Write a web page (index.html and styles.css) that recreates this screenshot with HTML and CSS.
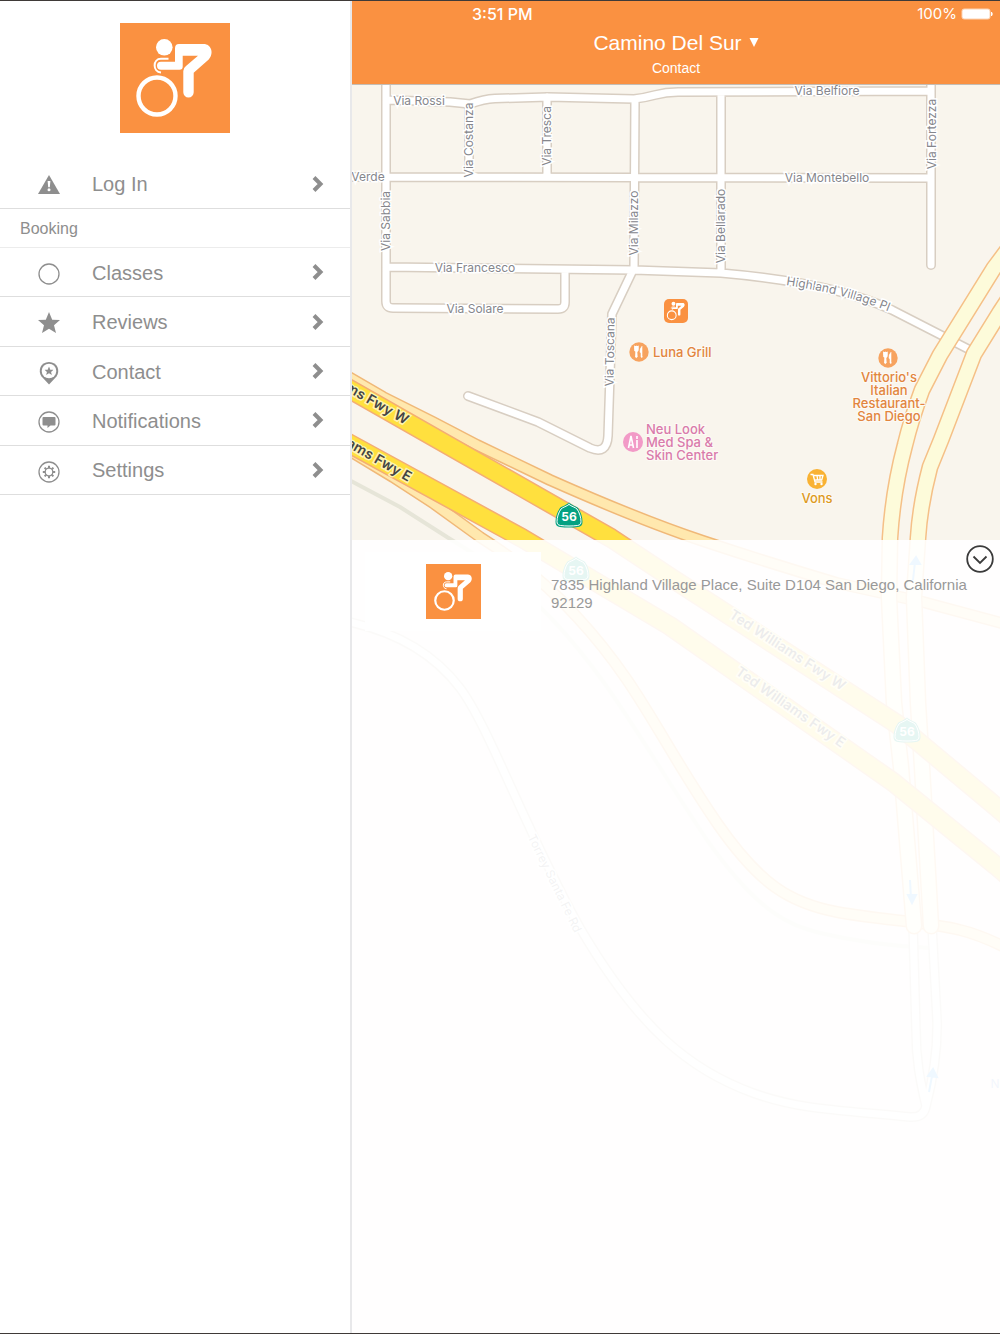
FILE: index.html
```html
<!DOCTYPE html>
<html lang="en">
<head>
  <meta charset="UTF-8">
  <meta name="viewport" content="width=device-width, initial-scale=1.0">
  <title>Camino Del Sur - Contact</title>
  <link rel="stylesheet" href="styles.css">
</head>
<body>
  <!-- shared shapes -->
  <svg class="defs" aria-hidden="true">
    <symbol id="rider" viewBox="0 0 110 110">
      <circle cx="44.3" cy="24.3" r="8.3" fill="#fff"/>
      <circle cx="37" cy="73" r="18.5" fill="none" stroke="#fff" stroke-width="4.4"/>
      <path d="M48.5 35.8H41c-8.500 0-8.500 13 0 13.700" fill="none" stroke="#fff" stroke-width="2"/>
      <path d="M55 25.300Q55 21 59 21H83.700C91 21 94.500 30 88.700 36.500L73.700 49.700V69.300a5.200 5.200 0 0 1-10.400 0V48Q63.300 45 66 43L78 32.700H62.700V43.500Q62.700 46.700 59.500 46.700H41a4 4 0 0 1 0-8H55Z" fill="#fff"/>
    </symbol>
    <symbol id="chevron" viewBox="0 0 12 18">
      <path d="M2 2.500 8.500 9 2 15.500" fill="none" stroke="currentColor" stroke-width="4"/>
    </symbol>
    <symbol id="shield" viewBox="0 0 28 26">
      <path d="M14 .5C17 3.500 21 4 23 6c3 4 4.500 9 4.500 14 0 3-1.500 4.500-4.500 5-6 .7-12 .7-18 0-3-.5-4.500-2-4.500-5C.5 15 2 10 5 6c2-2 6-2.500 9-5.500Z" fill="#04a182"/>
      <path d="M14 2.500c2.500 2 6 2.600 8 4.500 2.500 3.500 4 8.500 4 12.500 0 2.500-1 3.500-3.500 4-5.500.7-11.500.7-17 0-2.500-.5-3.500-1.500-3.500-4C2 15.500 3.500 10.500 6 7c2-1.900 5.500-2.500 8-4.500Z" fill="none" stroke="#fff"/>
    </symbol>
    <symbol id="food" viewBox="0 0 20 20">
      <circle cx="10" cy="10" r="9.700" fill="#f7a35f"/>
      <path d="M5.500 4v3.500q0 2 1.300 2.300L6.500 15q.8 1.200 1.700 0L7.900 9.800q1.400-.3 1.400-2.300V4M7.400 4v4" fill="#fff" stroke="#fff" stroke-width=".8"/>
      <path d="M13 15V4.300q-2.200 1.800-2 6l1 .5V15q.6.900 1 0Z" fill="#fff" stroke="#fff" stroke-width=".6"/>
    </symbol>
    <symbol id="star" viewBox="0 0 22 22">
      <path d="M11 0l3.200 7.700 7.800.4-6 5.200 2 7.700-7-4.300L4 21l2-7.700L0 8.100l7.800-.4Z" fill="currentColor"/>
    </symbol>
  </svg>

  <div class="app">
    <aside class="sidebar">
      <svg class="logo" viewBox="0 0 110 110" role="img" aria-label="Logo"><use href="#rider"/></svg>

      <nav>
        <a class="item login" href="#login">
          <svg class="icon" viewBox="0 0 22 22"><path d="M11 1 22 20H0Z" fill="currentColor"/><path d="M9.600 7h2.800l-.6 6.300h-1.600Z" fill="#fff"/><circle cx="11" cy="15.700" r="1.500" fill="#fff"/></svg>
          <span>Log In</span>
          <svg class="chevron"><use href="#chevron"/></svg>
        </a>

        <h2>Booking</h2>

        <ul class="menu">
          <li><a class="item" href="#classes">
            <svg class="icon" viewBox="0 0 22 22"><circle cx="11" cy="12" r="10" fill="none" stroke="currentColor" stroke-width="1.300"/></svg>
            <span>Classes</span>
            <svg class="chevron"><use href="#chevron"/></svg>
          </a></li>
          <li><a class="item" href="#reviews">
            <svg class="icon"><use href="#star"/></svg>
            <span>Reviews</span>
            <svg class="chevron"><use href="#chevron"/></svg>
          </a></li>
          <li><a class="item" href="#contact">
            <svg class="icon" viewBox="0 0 22 22">
              <path d="M3.500 15.500C-.5 9.500 2.500 1 11 1s11.500 8.500 7.500 14.500L11 23.500Z" fill="currentColor"/>
              <circle cx="11" cy="10" r="7.300" fill="#fff"/>
              <use href="#star" x="6.500" y="5.500" width="9" height="9"/>
            </svg>
            <span>Contact</span>
            <svg class="chevron"><use href="#chevron"/></svg>
          </a></li>
          <li><a class="item" href="#notifications">
            <svg class="icon" viewBox="0 0 22 22"><circle cx="11" cy="12" r="10" fill="none" stroke="currentColor" stroke-width="1.300"/><path d="M5.500 7h11q1 0 1 1v6.500q0 1-1 1h-4L9.500 18v-2.500h-4q-1 0-1-1V8q0-1 1-1Z" fill="currentColor"/></svg>
            <span>Notifications</span>
            <svg class="chevron"><use href="#chevron"/></svg>
          </a></li>
          <li><a class="item" href="#settings">
            <svg class="icon" viewBox="0 0 22 22">
              <circle cx="11" cy="12" r="10" fill="none" stroke="currentColor" stroke-width="1.300"/>
              <circle cx="11" cy="12" r="3.800" fill="none" stroke="currentColor" stroke-width="1.300"/>
              <path d="M11 5.800V8M11 16v2.200M4.800 12H7M15 12h2.200M6.600 7.600l1.600 1.600M13.800 14.800l1.600 1.600M6.600 16.400l1.600-1.600M13.800 9.200l1.600-1.600" stroke="currentColor" stroke-width="2"/>
            </svg>
            <span>Settings</span>
            <svg class="chevron"><use href="#chevron"/></svg>
          </a></li>
        </ul>
      </nav>
    </aside>

    <main>
      <header>
        <div class="status">
          <span class="time">3:51 PM</span>
          <span class="battery">100%
            <svg width="32" height="12" viewBox="0 0 32 12"><rect x=".5" y=".5" width="29" height="11" rx="3" fill="#fff" fill-opacity=".6"/><rect x="1.500" y="1.500" width="27" height="9" rx="2" fill="#fff"/><path d="M30.500 4q1.500 2 0 4Z" fill="#fff" stroke="#fff"/></svg>
          </span>
        </div>
        <button class="location" type="button">Camino Del Sur
          <svg width="10" height="10" viewBox="0 0 10 10"><path d="M.5 0H9.500L5 9Z" fill="#fff"/></svg>
        </button>
        <p class="page-name">Contact</p>
      </header>

      <section class="contact">
        <svg class="map" viewBox="352 85 648 1248" preserveAspectRatio="xMidYMin slice" role="img" aria-label="Map">
          <defs>
            <path id="streets" d="M386 70V301Q386 308 393 308L558 309Q565 309 565 302V270M386 267 634 270 721 273C790 279 850 290 892 310L972 351M340 177H386L931 178M386 100 450 102 470 104Q484 99 495 98.500L548 97 634 99Q644 98 655 95T678 92L931 91M469 104V177M547 97V177M635 99 634 270M721 92V272M931 70V265M633 270 612 314 608 436Q607 455 590 448L538 422 468 396"/>
            <path id="lower-streets" d="M340 620Q420 635 460 688C490 728 525 830 580 928C640 1030 690 1070 753 1093C800 1110 840 1110 910 1117Q924 1118 926 1106C920 1080 916 1060 916 1030L913 925M926 1106Q938 1060 937 1020L932 925"/>
            <path id="ramps" d="M345 375 383 397 433 422 477 445 550 480Q640 520 703 541T837 583L923 602 1020 628M345 448 393 477 433 503 480 537Q540 575 577 617C640 685 660 740 717 823C760 885 790 903 837 912C880 920 930 922 960 930Q985 936 1020 955"/>
            <path id="avenue" d="M1015 240 994 268 940 355 922 390Q911 420 905 445 893 490 890 538L889 597 894 703 901 767 914 926M1015 289 1000 312 974 354 941 440 930 467Q920 505 918 538L914 597 918 703 922 767 931 926"/>
            <path id="freeway" d="M330 378 611 538 670 577 897 724 1000 810 1030 836M330 433 522 538 670 626 893 782 1000 869 1030 895"/>
            <path id="highland" d="M786 285C825 291 860 299 900 316"/>
          </defs>

          <path class="rail" d="M340 475 400 507 447 537Q510 575 550 617C610 680 640 740 707 840C760 915 790 925 820 933Q870 945 930 948"/>
          <use class="casing" href="#lower-streets"/>
          <use class="road" href="#lower-streets"/>
          <use class="casing" href="#streets"/>
          <use class="road" href="#streets"/>
          <use class="ramp-casing" href="#ramps"/>
          <use class="ramp" href="#ramps"/>
          <use class="avenue-casing" href="#avenue"/>
          <use class="avenue" href="#avenue"/>
          <use class="freeway-casing" href="#freeway"/>
          <use class="freeway" href="#freeway"/>

          <g class="arrows">
            <path d="M913 580 915 562M911 564h9l-4-7ZM910 880 911 898M908 895h8l-4 8ZM929 1092 932 1076M928 1076l9 1-4-8Z"/>
          </g>

          <g class="street-names">
            <text x="419" y="105">Via Rossi</text>
            <text x="827" y="95">Via Belfiore</text>
            <text x="827" y="182">Via Montebello</text>
            <text x="368" y="181">Verde</text>
            <text x="475" y="272">Via Francesco</text>
            <text x="475" y="313">Via Solare</text>
            <text transform="translate(473 140) rotate(-90)">Via Costanza</text>
            <text transform="translate(551 136) rotate(-90)">Via Tresca</text>
            <text transform="translate(390 221) rotate(-90)">Via Sabbia</text>
            <text transform="translate(638 223) rotate(-90)">Via Milazzo</text>
            <text transform="translate(725 226) rotate(-90)">Via Bellarado</text>
            <text transform="translate(936 134) rotate(-90)">Via Fortezza</text>
            <text transform="translate(614 352) rotate(-89)">Via Toscana</text>
            <text transform="translate(551 885) rotate(64)">Torrey Santa Fe Rd</text>
            <text class="along"><textPath href="#highland">Highland Village Pl</textPath></text>
          </g>

          <g class="freeway-names">
            <text class="end" transform="translate(405 425) rotate(30)">Ted Williams Fwy W</text>
            <text class="end" transform="translate(408 482) rotate(30)">Ted Williams Fwy E</text>
            <text transform="translate(785 654) rotate(33)">Ted Williams Fwy W</text>
            <text transform="translate(788 711) rotate(35)">Ted Williams Fwy E</text>
          </g>

          <g class="shields">
            <use href="#shield" x="555" y="502" width="28" height="26"/>
            <text x="569" y="521">56</text>
            <use href="#shield" x="562" y="556" width="28" height="26"/>
            <text x="576" y="575">56</text>
            <use href="#shield" x="893" y="717" width="28" height="26"/>
            <text x="907" y="736">56</text>
          </g>

          <rect x="664" y="299" width="24" height="24" rx="5" fill="#fa9141"/>
          <use href="#rider" x="663" y="298" width="26" height="26"/>

          <g class="poi orange">
            <use href="#food" x="629" y="342" width="20" height="20"/>
            <text class="start" x="653" y="357">Luna Grill</text>
            <use href="#food" x="878" y="348" width="20" height="20"/>
            <text x="889" y="382">Vittorio's</text>
            <text x="889" y="395">Italian</text>
            <text x="889" y="408">Restaurant-</text>
            <text x="889" y="421">San Diego</text>
          </g>
          <g class="poi pink">
            <circle cx="633" cy="442" r="10" fill="#f29ac7"/>
            <path d="M628.500 448 631 436 633.500 448M629.500 445h3.500M637 448v-8M637 439v-3" fill="none" stroke="#fff" stroke-width="1.600"/>
            <text class="start" x="646" y="434">Neu Look</text>
            <text class="start" x="646" y="447">Med Spa &amp;</text>
            <text class="start" x="646" y="460">Skin Center</text>
          </g>
          <g class="poi gold">
            <circle cx="817" cy="479" r="10" fill="#f9b233"/>
            <path d="M810.500 474.500h2.500l2 7.500h7.500M814 475.500h9l-1.300 4.500h-6.500M817 475.500l.7 4.500M820 475.500v4.500" fill="none" stroke="#fff" stroke-width="1.300"/>
            <circle cx="815.500" cy="484" r="1.200" fill="#fff"/><circle cx="821.500" cy="484" r="1.200" fill="#fff"/>
            <text x="817" y="503">Vons</text>
          </g>
          <text class="school" x="995" y="1088">N</text>
        </svg>

        <div class="panel">
          <div class="card">
            <svg class="logo small" viewBox="0 0 110 110" role="img" aria-label="Logo"><use href="#rider"/></svg>
          </div>
          <address>7835 Highland Village Place, Suite D104 San Diego, California 92129</address>
          <button class="collapse" type="button" aria-label="Hide details">
            <svg viewBox="0 0 28 28"><circle cx="14" cy="14" r="12.800" fill="none" stroke="#3b3b3b" stroke-width="1.800"/><path d="M7.500 11.500 14 18l6.500-6.500" fill="none" stroke="#3b3b3b" stroke-width="1.800"/></svg>
          </button>
        </div>
      </section>
    </main>
  </div>
</body>
</html>
```

FILE: styles.css
```css
* {
  box-sizing: border-box;
}
body {
  margin: 0;
  font-family: "Liberation Sans", Arial, sans-serif;
  color: #8e8e8e;
  background: #fff;
}
.defs {
  position: absolute;
  width: 0;
  height: 0;
}
.app {
  display: flex;
  min-height: 100vh;
  border-top: 1px solid #3f3a38;
  border-bottom: 1px solid #3f3a38;
}

/* sidebar */
.sidebar {
  flex: 0 0 352px;
  padding-top: 22px;
  border-right: 2px solid #e8e8ea;
}
.logo {
  display: block;
  width: 110px;
  height: 110px;
  margin: 0 auto 26px;
  background: #fa9141;
}
.item {
  display: flex;
  align-items: center;
  flex: 1;
  min-height: 49px;
  padding: 0 26px 0 38px;
  border-bottom: 1px solid #dedede;
  color: #8e8e8e;
  font-size: 20px;
  text-decoration: none;
}
.login {
  min-height: 50px;
}
.item span {
  flex: 1;
  padding-top: 2px;
}
.icon {
  width: 22px;
  height: 22px;
  margin: 2px 32px 0 0;
  overflow: visible;
}
.chevron {
  width: 12px;
  height: 18px;
}
h2 {
  margin: 0;
  padding: 2px 20px 0;
  font-size: 16px;
  font-weight: normal;
  line-height: 36px;
  border-bottom: 1px solid #ececec;
}
.menu {
  display: flex;
  flex-direction: column;
  min-height: 247px;
  margin: 0;
  padding: 0;
  list-style: none;
}
.menu li {
  display: flex;
  flex: 1;
}

/* top bar */
main {
  display: flex;
  flex-direction: column;
  flex: 1;
  min-width: 0;
}
header {
  display: flex;
  flex-direction: column;
  align-items: center;
  height: 84px;
  color: #fff;
  background: #fa9141;
  border-bottom: 1px solid #c4bdb5;
}
.status {
  display: flex;
  justify-content: space-between;
  align-self: stretch;
  padding: 3px 7px 0 120px;
  font-family: Inter, sans-serif;
  font-size: 15px;
  line-height: 20px;
}
.time {
  font-size: 16px;
  font-weight: 500;
}
.battery {
  display: flex;
  align-items: center;
  gap: 4px;
}
.location {
  display: flex;
  align-items: center;
  gap: 7px;
  margin-top: 6px;
  padding: 0;
  border: 0;
  background: none;
  color: #fff;
  font-family: inherit;
  font-size: 21px;
  line-height: 26px;
  cursor: pointer;
}
.page-name {
  margin: 3px 0 0;
  font-size: 14px;
  line-height: 18px;
}

/* map with the details panel over its lower part */
.contact {
  display: grid;
  grid-template-rows: 455px 1fr;
  flex: 1;
  background: #f9f5ed;
}
.map {
  grid-area: 1 / 1 / 3 / 2;
  width: 100%;
  height: 100%;
}
.map use,
.rail {
  stroke-linecap: round;
  stroke-linejoin: round;
}
.casing, .road, .ramp-casing, .ramp, .avenue-casing, .avenue, .freeway-casing, .freeway, .rail {
  fill: none;
}
.casing {
  stroke: #d8cec2;
  stroke-width: 10px;
}
.road {
  stroke: #fff;
  stroke-width: 7px;
}
.ramp-casing {
  stroke: #f0b878;
  stroke-width: 12px;
}
.ramp {
  stroke: #ffe8ae;
  stroke-width: 9px;
}
.avenue-casing {
  stroke: #f5c087;
  stroke-width: 17px;
}
.avenue {
  stroke: #fdfbda;
  stroke-width: 14px;
}
.freeway-casing {
  stroke: #f4ad74;
  stroke-width: 20px;
}
.freeway {
  stroke: #ffe03e;
  stroke-width: 17px;
}
.rail {
  stroke: #e6e5d8;
  stroke-width: 4px;
}
.arrows {
  fill: #5cb4ff;
  stroke: #5cb4ff;
  stroke-width: 2px;
}
.map text {
  font-family: Inter, sans-serif;
  text-anchor: middle;
}
.street-names text {
  fill: #85868c;
  font-size: 12px;
  stroke: #fff;
  stroke-width: 3px;
  paint-order: stroke;
}
.map .along,
.map .start {
  text-anchor: start;
}
.map .end {
  text-anchor: end;
}
.freeway-names text {
  fill: #444;
  font-size: 14px;
  font-weight: 600;
  stroke: #fff3b0;
  stroke-width: 3px;
  paint-order: stroke;
}
.shields text {
  fill: #fff;
  font-size: 12px;
  font-weight: 700;
}
.poi text {
  font-size: 13px;
  font-weight: 500;
  stroke: #fdfaf5;
  stroke-width: 2px;
  paint-order: stroke;
}
.orange text {
  fill: #e2853e;
}
.pink text {
  fill: #d97bab;
}
.gold text {
  fill: #dd9a1f;
}
.school {
  fill: #7fa2e8;
  font-size: 12px;
}
.panel {
  position: relative;
  grid-area: 2 / 1 / 3 / 2;
  display: flex;
  align-items: flex-start;
  gap: 10px;
  padding: 12px 28px 12px 13px;
  background: rgba(255, 255, 255, 0.9);
}
.card {
  flex: 0 0 176px;
  padding: 12px;
  background: #fff;
}
.small {
  width: 55px;
  height: 55px;
  margin: 0 auto;
}
address {
  padding-top: 24px;
  color: #999;
  font-size: 15px;
  font-style: normal;
  line-height: 18px;
}
.collapse {
  position: absolute;
  top: 5px;
  right: 6px;
  width: 28px;
  height: 28px;
  padding: 0;
  border: 0;
  background: none;
  cursor: pointer;
}
.collapse svg {
  display: block;
}
```
